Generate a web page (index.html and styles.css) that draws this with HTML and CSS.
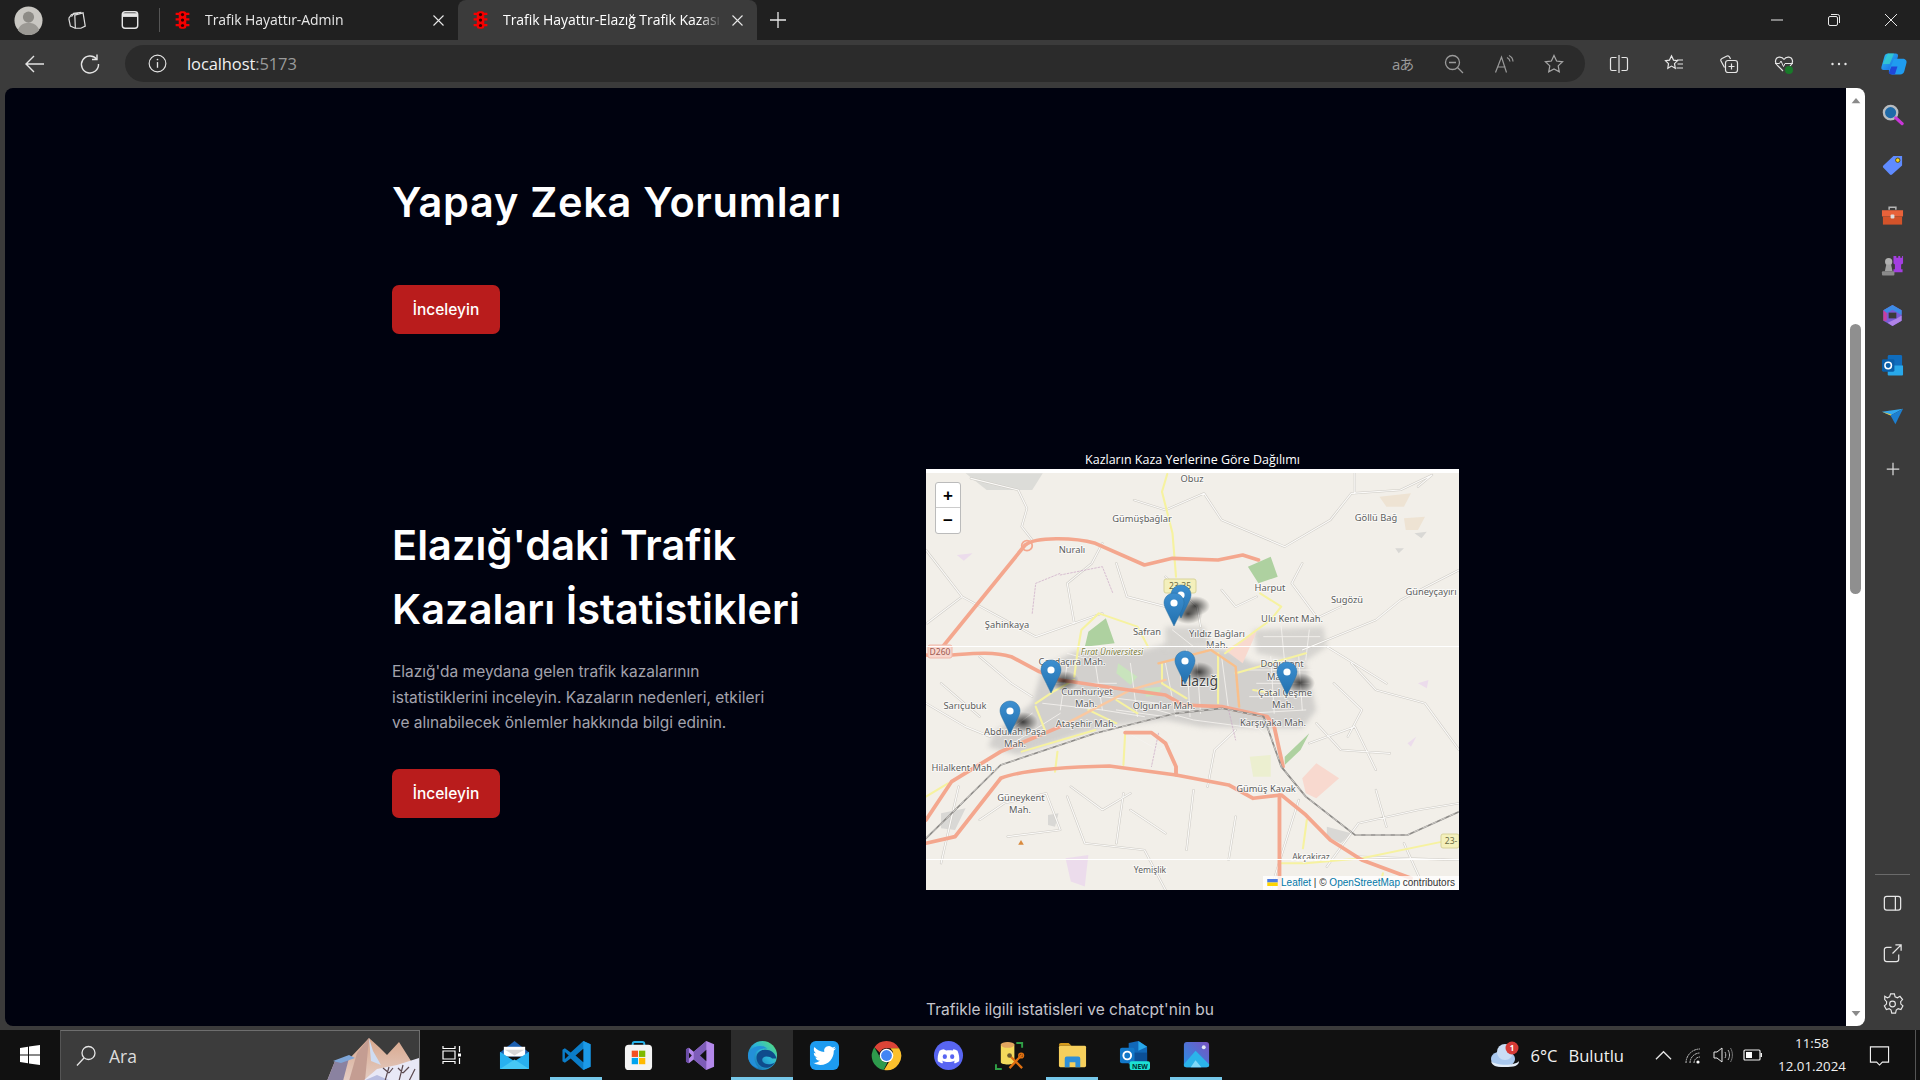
FILE: index.html
```html
<!DOCTYPE html>
<html lang="tr">
<head>
<meta charset="utf-8">
<title>Trafik Hayattır-Elazığ Trafik Kazaları</title>
<link rel="stylesheet" href="styles.css">
</head>
<body>
<div class="screen">
  <svg class="defs" width="0" height="0">
    <defs>
      <g id="light"><rect x="5" y="1" width="6" height="14" rx="2" fill="#f40000"/><path d="M2.500 3h11M2.500 7.500h11M2.500 12h11" stroke="#f40000" stroke-width="1.800"/><circle cx="8" cy="3.600" r="1.300" fill="#300"/><circle cx="8" cy="8" r="1.300" fill="#300"/><circle cx="8" cy="12.400" r="1.300" fill="#300"/></g>
      <path id="minor" d="M145 85L280 120L305 175L290 230L320 270M610 150L700 180L810 130L860 210L1040 290L1170 210L1230 130L1370 120L1460 75L1420 110M17 300L120 440L330 560L520 490M120 440L20 520M1090 600L1300 510L1370 450L1537 360M1230 640L1300 720L1440 760L1537 900M1160 590L1330 700M170 1110L240 1060L360 1030L400 1140L250 1160M900 840L840 900L820 1010M1080 1050L1000 1320M1160 1250L1250 1120L1420 1080L1537 1060M420 1040L470 1180L640 1200L700 1320M1240 1220L1537 1230M520 280L490 340L420 400L440 520M700 380L790 470L800 530M1090 340L1060 400L1130 500M1200 470L1120 510M1130 820L1200 900L1340 910M110 1010L60 1240M780 1020L760 1200M1300 1020L1330 1130M580 1030L560 1180M900 1100L880 1230M17 760L130 830L200 860M600 1080L700 1150M1380 1180L1440 1320M1240 70L1240 130M560 340L590 440L700 470M860 420L900 470L960 440M1110 880L1240 830L1300 960M170 620L260 700L320 740M60 700L170 800M430 1010L520 1080L600 1030M1180 700L1260 780L1220 860" fill="none"/>
      <linearGradient id="pinGrad" x1="0" y1="0" x2="0" y2="1"><stop offset="0" stop-color="#3d8fd0"/><stop offset="1" stop-color="#2270ae"/></linearGradient>
      <radialGradient id="shadowGrad"><stop offset="0" stop-color="#000" stop-opacity=".7"/><stop offset=".5" stop-color="#000" stop-opacity=".35"/><stop offset="1" stop-color="#000" stop-opacity="0"/></radialGradient>
      <g id="pin"><path d="M10 0C4.500 0 0 4.400 0 9.800c0 2 1 4.900 2.700 8.300L10 33l7.300-14.900C19 14.700 20 11.800 20 9.800 20 4.400 15.500 0 10 0z" fill="url(#pinGrad)" stroke="#2a6e9e" stroke-width=".5"/><circle cx="10" cy="10" r="3.600" fill="#fff"/></g>
      <linearGradient id="edgeA" x1="0" y1="1" x2="1" y2="0"><stop offset="0" stop-color="#0c59a4"/><stop offset=".55" stop-color="#2cb4d9"/><stop offset="1" stop-color="#5ce66c"/></linearGradient>
      <linearGradient id="copA" x1="0" y1="0" x2="1" y2="1"><stop offset="0" stop-color="#2bc4f4"/><stop offset="1" stop-color="#1a5fe0"/></linearGradient>
      <linearGradient id="photoA" x1="0" y1="1" x2="1" y2="0"><stop offset="0" stop-color="#2590e8"/><stop offset="1" stop-color="#7a52c0"/></linearGradient>
      <linearGradient id="peak" x1="0" y1="0" x2="0" y2="1"><stop offset="0" stop-color="#d8a78c"/><stop offset="1" stop-color="#e4cdc4"/></linearGradient>
    </defs>
  </svg>

  <header class="tabstrip">
    <svg class="avatar" viewBox="0 0 30 30"><circle cx="15" cy="15" r="14.500" fill="#c9c7c2"/><circle cx="15" cy="11.500" r="5.800" fill="#8d8b86"/><path d="M4 25c2-6 6-7.500 11-7.500S24 19 26 25a14 14 0 0 1-22 0z" fill="#9b9994"/></svg>
    <svg class="tool-ico collections-ico" viewBox="0 0 20 20" fill="none" stroke="#dcdcdc" stroke-width="1.100"><path d="M8 5.500l7.500-2 2 12-4 2H8.500z"/><path d="M5 7l2-3 7-1"/><path d="M2.500 8.500L5 5l6-1"/><path d="M2.500 8.500l1.500 7 4.500 2"/></svg>
    <svg class="tool-ico tabs-ico" viewBox="0 0 20 20" fill="none" stroke="#e6e6e6" stroke-width="1.300"><rect x="3" y="2.500" width="14" height="15" rx="2.500"/><path d="M3.500 5.500h13" stroke-width="3.400"/></svg>
    <span class="tab-sep"></span>
    <div class="tab">
      <svg class="favicon" viewBox="2 0 12 16"><use href="#light"/></svg>
      <span class="tab-title">Trafik Hayattır-Admin</span>
      <svg class="tab-close" viewBox="0 0 11 11" stroke="#e8e8e8" stroke-width="1.100"><path d="M.5.5l10 10M10.500.5l-10 10"/></svg>
    </div>
    <div class="tab tab-active">
      <svg class="favicon" viewBox="2 0 12 16"><use href="#light"/></svg>
      <span class="tab-title">Trafik Hayattır-Elazığ Trafik Kazası</span>
      <svg class="tab-close" viewBox="0 0 11 11" stroke="#e8e8e8" stroke-width="1.100"><path d="M.5.5l10 10M10.500.5l-10 10"/></svg>
    </div>
    <svg class="tab-new" viewBox="0 0 18 18" stroke="#e8e8e8" stroke-width="1.300"><path d="M9 1v16M1 9h16"/></svg>
    <div class="window-btns">
      <svg viewBox="0 0 14 14" stroke="#e8e8e8" fill="none"><path d="M1 7h12"/></svg>
      <svg viewBox="0 0 14 14" stroke="#e8e8e8" fill="none"><rect x="1.500" y="3.500" width="9" height="9" rx="1.500"/><path d="M4 1.500h6.500a2 2 0 0 1 2 2V10"/></svg>
      <svg viewBox="0 0 14 14" stroke="#e8e8e8" fill="none"><path d="M1 1l12 12M13 1L1 13"/></svg>
    </div>
  </header>

  <nav class="toolbar">
    <svg class="nav-ico" viewBox="0 0 22 22" fill="none" stroke="#e4e4e4" stroke-width="1.400"><path d="M20 11H2M10 3l-8 8 8 8"/></svg>
    <svg class="nav-ico" viewBox="0 0 22 22" fill="none" stroke="#e4e4e4" stroke-width="1.400"><path d="M17.500 6A8.500 8.500 0 1 0 19.500 11"/><path d="M18 1.500V6.500H13"/></svg>
    <div class="address">
      <svg class="info-ico" viewBox="0 0 20 20" fill="none" stroke="#e4e4e4" stroke-width="1.200"><circle cx="10" cy="10" r="8.800"/><path d="M10 8.500v6" stroke-width="1.400"/><circle cx="10" cy="5.800" r=".9" fill="#e4e4e4" stroke="none"/></svg>
      <span class="url">localhost<span class="url-port">:5173</span></span>
      <div class="addr-icons">
        <span class="translate-ico">aあ</span>
        <svg viewBox="0 0 20 20" fill="none" stroke="#9a9a9a" stroke-width="1.300"><circle cx="8.500" cy="8.500" r="7"/><path d="M5 8.500h7M13.500 13.500l5.500 5.500"/></svg>
        <svg viewBox="0 0 20 20" fill="none" stroke="#9a9a9a" stroke-width="1.200"><path d="M1.500 18.500L7.500 3l5 15.500M3.500 13h8"/><path d="M13 3.500a5 5 0 0 1 3 4M15 1.500a7 7 0 0 1 4 6"/></svg>
        <svg viewBox="0 0 20 20" fill="none" stroke="#a8a8a8" stroke-width="1.200"><path d="M10 1.500l2.600 5.500 6 .8-4.400 4.100 1.100 6L10 15l-5.300 2.900 1.100-6L1.400 7.800l6-.8z"/></svg>
      </div>
    </div>
    <div class="tool-icons">
      <svg viewBox="0 0 20 20" fill="none" stroke="#e6e6e6" stroke-width="1.200"><path d="M7.500 3.500H3a1.500 1.500 0 0 0-1.500 1.500v10A1.500 1.500 0 0 0 3 16.500h4.500M12.500 3.500H17A1.500 1.500 0 0 1 18.500 5v10a1.500 1.500 0 0 1-1.500 1.500h-4.500M10 1v18"/></svg>
      <svg viewBox="0 0 20 20" fill="none" stroke="#e6e6e6" stroke-width="1.200"><path d="M7.500 1.800l2 4.300 4 .6-3 3 .8 4.600-3.800-2.200-3.700 2.200.7-4.600-3-3 4-.6z"/><path d="M13 6h6M13.500 10h5.500M12.500 14h6.500"/></svg>
      <svg viewBox="0 0 20 20" fill="none" stroke="#e6e6e6" stroke-width="1.200"><rect x="6.500" y="6.500" width="12" height="12" rx="2.500"/><path d="M12.500 9.500v6M9.500 12.500h6M5.500 13.500L2 7c-.5-1 0-2 1-2.500l5-2.500c1-.4 2 0 2.500 1l1 2"/></svg>
      <svg viewBox="0 0 20 20" fill="none"><path d="M10 5.500C8 2 2 2 1.500 7c-.2 2 1 3.800 2.500 5l5 5M10 5.500C12 2 18 2 18.500 7c.2 2-1 3.800-2.500 5" stroke="#e6e6e6" stroke-width="1.200"/><path d="M1 9.500h4.500l1.500-2.500 2.500 5.500L11 9.500h8" stroke="#e6e6e6"/><circle cx="15" cy="16" r="4" fill="#197a2a"/></svg>
      <svg viewBox="0 0 20 20" fill="#e6e6e6"><circle cx="3.500" cy="10" r="1.200"/><circle cx="10" cy="10" r="1.200"/><circle cx="16.500" cy="10" r="1.200"/></svg>
      <svg class="copilot" viewBox="0 0 30 30"><path d="M8 3h9c2 0 3 1 2.600 3L16 19c-.5 2-2 3-4 3H3c-2 0-3-1.500-2.500-3.500L4 6c.6-2 2-3 4-3z" fill="url(#copA)"/><path d="M8 3h7L10 15H2z" fill="#38d6c8" opacity=".7"/><path d="M15 9h10c3 0 5 2 4.400 4.500L27 23c-.7 2.500-2.300 4-5 4h-9c-3 0-4.500-2-3.800-4.500z" fill="#1f9cf0"/><path d="M12 18h7l-3 9h-4c-2 0-3-1-2.800-2.500z" fill="#2046d8"/></svg>
    </div>
  </nav>

  <div class="browser">
    <main class="viewport">
      <section class="intro">
        <h1 class="heading">Yapay Zeka Yorumları</h1>
        <a class="btn">İnceleyin</a>
      </section>

      <section class="stats">
        <div class="stats-copy">
          <h1 class="heading heading-wrap">Elazığ'daki Trafik Kazaları İstatistikleri</h1>
          <p class="lead">Elazığ'da meydana gelen trafik kazalarının<br>istatistiklerini inceleyin. Kazaların nedenleri, etkileri<br>ve alınabilecek önlemler hakkında bilgi edinin.</p>
          <a class="btn">İnceleyin</a>
        </div>
        <figure class="chart">
          <figcaption class="chart-title">Kazların Kaza Yerlerine Göre Dağılımı</figcaption>
          <div class="map">
            <svg class="map-svg" viewBox="0 0 533 421">
              <rect width="533" height="421" fill="#f2efe9"/>
              <g class="map-base" transform="translate(-6 -19) scale(.3507 .3333)" fill="none" stroke-linejoin="round" stroke-linecap="round">
                <path d="M640 600L720 575L880 600L950 640L1100 640L1130 780L1090 835L960 835L800 830L700 810L560 825L450 855L280 915L195 890L210 850L320 760L350 650L440 605Z" fill="#d2d0cd" class="soft"/>
                <path d="M950 540L1150 530L1160 590L1090 640L960 610Z M700 530L810 530L830 590L700 600Z" fill="#d6d4d0" class="soft"/>
                <path d="M130 70H350L320 120H190Z" fill="#dcdcd8"/>
                <path d="M480 545L530 505L555 580L470 590Z M935 350L1000 320L1020 380L965 400Z M1040 920L1110 850L1085 900L1040 945Z" fill="#aed1a0"/>
                <path d="M565 640L620 680L600 705L560 670Z M640 715L690 710L680 735L645 740Z" fill="#c9e4bd"/>
                <path d="M1090 985L1130 940L1195 985L1130 1045L1100 1030Z M870 600L960 545L920 640Z" fill="#f8d9cf"/>
                <path d="M105 315L150 310L125 332Z M415 1225L480 1215L470 1310L430 1295Z M1390 880L1415 860L1400 890Z M1420 700L1450 690L1445 715Z" fill="#ecdcec"/>
                <path d="M1310 140L1400 130L1380 170L1330 170Z M1380 205L1440 200L1420 240L1385 240Z" fill="#eee3d3"/>
                <path d="M940 920L1000 915L1000 980L950 980Z" fill="#ecefd0"/>
                <path d="M1410 250L1445 245L1430 265Z M1355 295L1380 295L1365 310Z M60 1090L130 1075L100 1140L60 1135Z M1160 1130L1230 1150L1200 1180L1160 1160Z M365 1095L395 1090L385 1130L365 1125Z" fill="#d9d8d5"/>
                <use href="#minor" stroke="#cdcac4" stroke-width="6.500"/>
                <use href="#minor" stroke="#fbfaf8" stroke-width="3.500"/>
                <path d="M640 770L780 810L960 835M560 830L680 900L720 880M960 830L1020 890M420 610L520 640M350 760L520 780L640 800M1000 620L1010 790M1080 620L1090 780M940 660L1120 660M760 600L770 800M700 640L730 800M860 620L880 780M960 700L1110 700M980 560L1140 560M1030 530L1040 640M1110 540L1100 630M230 860L320 790M250 890L400 790M420 640L400 780M500 640L520 780M600 640L620 800M360 700L560 700M520 740L680 760M720 540L780 590M790 640L800 790M940 740L1110 740M930 790L1100 780M560 780L700 800" stroke="#f4f2ef" stroke-width="2.500"/>
                <path d="M400 375L520 350L550 430M320 490L330 400L400 370M880 780L900 870M680 850L660 950" stroke="#c9a5c5" stroke-width="2" stroke-dasharray="5 5"/>
                <g stroke="#f6f2a0" stroke-width="6">
                  <path d="M705 72L690 125L720 250L730 380M450 600L460 540L510 490L620 530L650 590M970 430L1030 470L1000 510L960 540L870 610M585 850L580 945M392 905L385 965"/>
                  <path d="M330 760L380 725L440 690M290 905L500 840M330 770L360 850M440 680L450 600M1103 1110L1092 1195M1030 1240L1100 1240L1260 1225L1490 1175M1320 1270L1310 1320"/>
                  <path d="M690 640L690 700L760 745M850 610L850 760M900 670L1100 610M950 720L1010 730M560 750L620 790M480 780L560 820M17 1040L80 1000"/>
                </g>
                <path d="M680 640L830 600L900 650L910 770" stroke="#f9bf8a" stroke-width="7"/>
                <path d="M400 830L600 720L700 690" stroke="#fac8a0" stroke-width="7"/>
                <g stroke="#f4a78e" stroke-width="11">
                  <path d="M65 590L300 285C330 260 440 262 500 280L640 345L720 325L850 330L920 315L965 330"/>
                  <path d="M17 615C80 625 180 595 260 620L340 665L400 690L560 715L700 735L750 765L860 770L990 800L1010 830L1035 950"/>
                  <path d="M17 1180L100 1160L230 985C300 955 460 950 540 948L730 975L880 1005L950 1045L1030 1035L1100 1095L1170 1170L1260 1230L1400 1285"/>
                  <path d="M1025 1035V1320"/>
                  <path d="M17 1110L90 995L230 905L400 830"/>
                  <path d="M585 848H660L700 880L730 950V975"/>
                </g>
                <circle cx="305" cy="287" r="15" stroke="#f4a78e" stroke-width="5"/>
                <path d="M17 1165L100 1080L230 945L500 850L730 790L860 775L980 800L1030 950L1100 1040L1240 1155H1390L1537 1085" stroke="#8d8b88" stroke-width="5"/>
                <path d="M17 1165L100 1080L230 945L500 850L730 790L860 775L980 800L1030 950L1100 1040L1240 1155H1390L1537 1085" stroke="#d8d6d2" stroke-width="2.500" stroke-dasharray="14 14"/>
                <path d="M288 1170l8 14h-16z" fill="#d98a3d"/>
              </g>
              <g class="shields">
                <rect x="2" y="176" width="24" height="13" rx="2" fill="#f8d6cd" stroke="#f0b8aa"/><text x="14" y="186" class="lbl-sh lbl-sh-red">D260</text>
                <rect x="238" y="110" width="32" height="14" rx="2" fill="#f4f0bc" stroke="#d8d39a"/><text x="254" y="120" class="lbl-sh">23-35</text>
                <rect x="515" y="365" width="18" height="14" rx="2" fill="#f4f0bc" stroke="#d8d39a"/><text x="525" y="375" class="lbl-sh">23-</text>
              </g>
              <g class="labels">
                <text x="266" y="13">Obuz</text><text x="216" y="53">Gümüşbağlar</text><text x="450" y="52">Göllü Bağ</text><text x="146" y="84">Nuralı</text><text x="344" y="122">Harput</text><text x="421" y="134">Sugözü</text><text x="505" y="126">Güneyçayırı</text><text x="366" y="153">Ulu Kent Mah.</text><text x="81" y="159">Şahinkaya</text><text x="221" y="166">Safran</text><text x="291" y="168">Yıldız Bağları</text><text x="291" y="179">Mah.</text>
                <text x="186" y="186" class="lbl-uni">Fırat Üniversitesi</text>
                <text x="146" y="196">Çaydaçıra Mah.</text><text x="356" y="198">Doğukent</text><text x="352" y="211">Mah.</text><text x="273" y="217" class="lbl-city">Elazığ</text><text x="161" y="226">Cumhuriyet</text><text x="160" y="238">Mah.</text><text x="39" y="240">Sarıçubuk</text><text x="238" y="240">Olgunlar Mah.</text><text x="359" y="227">Çatal Çeşme</text><text x="357" y="239">Mah.</text><text x="160" y="258">Ataşehir Mah.</text><text x="347" y="257">Karşıyaka Mah.</text><text x="89" y="266">Abdullah Paşa</text><text x="89" y="278">Mah.</text><text x="37" y="302">Hilalkent Mah.</text><text x="340" y="323">Gümüş Kavak</text><text x="95" y="332">Güneykent</text><text x="94" y="344">Mah.</text><text x="385" y="391" class="lbl-small">Akçakiraz</text><text x="224" y="404" class="lbl-small">Yemişlik</text>
              </g>
              <path d="M0 177.500H533M0 390.500H533" stroke="#fff" stroke-width="1.200"/>
              <rect width="533" height="4" fill="#fff"/>
              <g class="pin-shadows">
                <ellipse cx="269" cy="137" rx="15" ry="10" fill="url(#shadowGrad)"/><ellipse cx="262" cy="145" rx="15" ry="10" fill="url(#shadowGrad)"/><ellipse cx="138" cy="212" rx="15" ry="10" fill="url(#shadowGrad)"/><ellipse cx="273" cy="203" rx="15" ry="10" fill="url(#shadowGrad)"/><ellipse cx="374" cy="214" rx="15" ry="10" fill="url(#shadowGrad)"/><ellipse cx="97" cy="253" rx="15" ry="10" fill="url(#shadowGrad)"/>
              </g>
              <use href="#pin" x="245" y="116"/><use href="#pin" x="238" y="124"/><use href="#pin" x="115" y="191"/><use href="#pin" x="249" y="182"/><use href="#pin" x="351" y="193"/><use href="#pin" x="74" y="232"/>
            </svg>
            <div class="zoom-ctl"><span class="zoom-btn">+</span><span class="zoom-btn">−</span></div>
            <div class="attrib"><svg class="flag" viewBox="0 0 12 8"><rect width="12" height="4" fill="#4c7be1"/><rect y="4" width="12" height="4" fill="#ffd500"/></svg> <a>Leaflet</a> | © <a>OpenStreetMap</a> contributors</div>
          </div>
        </figure>
      </section>

      <section class="next">
        <p class="next-text">Trafikle ilgili istatisleri ve chatcpt'nin bu</p>
      </section>
    </main>

    <div class="scrollbar">
      <svg class="sb-arrow" viewBox="0 0 12 8"><path d="M6 1l5 6H1z" fill="#8a8a8a"/></svg>
      <div class="sb-track"><div class="sb-thumb"></div></div>
      <svg class="sb-arrow" viewBox="0 0 12 8"><path d="M6 7l5-6H1z" fill="#8a8a8a"/></svg>
    </div>

    <aside class="sidebar">
      <div class="side-top">
        <svg viewBox="0 0 24 24"><circle cx="10" cy="10" r="7" fill="#1f6aa8" stroke="#b8bcc0" stroke-width="2.400"/><path d="M15.500 15.500L22 21.500" stroke="#c936d8" stroke-width="3.400" stroke-linecap="round"/></svg>
        <svg viewBox="0 0 24 24"><path d="M2.500 13L13 3h9v10L11.500 22.500c-.7.7-1.600.7-2.200 0L2.500 15.300c-.7-.7-.7-1.600 0-2.300z" fill="#5f8bff"/><circle cx="17.500" cy="7.500" r="2.300" fill="#f4d21f" stroke="#554a10"/></svg>
        <svg viewBox="0 0 24 24"><path d="M8.500 6V3.500h7V6" fill="none" stroke="#b5b5b5" stroke-width="1.600"/><path d="M1 6.500h22V13H1z" fill="#e8623a"/><path d="M2 13h20v8.500H2z" fill="#d3532a"/><rect x="10" y="11" width="4" height="4" rx="1" fill="#ddd"/></svg>
        <svg viewBox="0 0 24 24"><path d="M14 2h2v2h2V2h2v2h2V2h1v8l-2 1v5h1.500v3H13v-3h1.500v-5L13 10V2z" fill="#a33fe0"/><circle cx="8" cy="8" r="3.800" fill="#b0b0b0"/><path d="M5.500 11h5l1.500 7H4z" fill="#a2a2a2"/><rect x="1" y="18" width="13" height="4.500" rx="1" fill="#8a8a8a"/></svg>
        <svg viewBox="0 0 24 24"><path d="M12 1l9.500 5.500v11L12 23l-9.500-5.500v-11z" fill="#7a5cd6"/><path d="M12 1l9.500 5.500v5L12 6 6 9.500 2.500 6.500z" fill="#3c8ce6"/><path d="M2.500 6.500L6 9.500v8l-3.500 0z" fill="#c93f9f"/><path d="M21.500 12v5.500L12 23l-5-3.500 9-4z" fill="#b083e8"/><path d="M8 9h8v6H8z" fill="#3b3b3b"/></svg>
        <svg viewBox="0 0 24 24"><rect x="7" y="1" width="15" height="15" rx="1.500" fill="#0f6cbd"/><path d="M7 12h16v9.500a1 1 0 0 1-1 1H8a1 1 0 0 1-1-1z" fill="#28a8ea"/><rect x="1" y="5.500" width="13" height="13" rx="1.500" fill="#0a5ea8"/><circle cx="7.500" cy="12" r="3.400" fill="none" stroke="#fff" stroke-width="1.600"/></svg>
        <svg viewBox="0 0 24 24"><path d="M1 7l22-3-13 7z" fill="#33a8ef"/><path d="M1 7l9 4 1-1z" fill="#f4c430"/><path d="M10 11L23 4l-8 16z" fill="#1d7fd0"/></svg>
        <svg class="side-plus" viewBox="0 0 24 24" stroke="#d8d8d8" stroke-width="1.500"><path d="M12 4.500v15M4.500 12h15"/></svg>
      </div>
      <div class="side-bottom">
        <span class="side-sep"></span>
        <svg viewBox="0 0 24 24" fill="none" stroke="#e6e6e6" stroke-width="1.300"><rect x="3.500" y="4.500" width="17" height="14.500" rx="2.500"/><path d="M15 4.500v14.500"/></svg>
        <svg viewBox="0 0 24 24" fill="none" stroke="#e6e6e6" stroke-width="1.300"><path d="M11 5.500H6A2.500 2.500 0 0 0 3.500 8v10A2.500 2.500 0 0 0 6 20.500h10a2.500 2.500 0 0 0 2.500-2.500v-5M12 12l9-9M15 3h6v6"/></svg>
        <svg viewBox="0 0 24 24" fill="none" stroke="#e6e6e6" stroke-width="1.200"><path d="M10 2h4l.7 3 2.400 1 2.700-1.500 2.700 3.400-2 2.200.2 2.500 2.200 1.900-2.100 3.700-2.900-.9-2 1.500-.7 3.200h-4l-.7-3.200-2-1.500-2.900.9-2.100-3.700 2.200-1.900.2-2.500-2-2.200L3.900 4.500 6.600 6 9 5z"/><circle cx="12" cy="12.500" r="3"/></svg>
      </div>
    </aside>
  </div>

  <footer class="taskbar">
    <div class="start"><svg viewBox="0 0 20 20" fill="#fff"><path d="M0 3l8-1.200V9.400H0zM9 1.600L20 0v9.400H9zM0 10.400h8v7.800L0 17zM9 10.400h11V20L9 18.400z"/></svg></div>
    <div class="search">
      <svg class="search-ico" viewBox="0 0 22 22" fill="none" stroke="#e6e6e6" stroke-width="1.300"><circle cx="13.500" cy="8" r="6.500"/><path d="M9 13L2 20.500"/></svg>
      <span class="search-text">Ara</span>
      <svg class="search-art" viewBox="0 0 100 50">
        <path d="M8 50L16 30L32 26L50 7L60 16L68 24L80 11L92 30L100 28V50z" fill="url(#peak)"/>
        <path d="M8 50L16 30L30 27L24 50z" fill="#8a82a0"/>
        <path d="M30 50L38 22L50 7L46 50z" fill="#c49d92"/>
        <path d="M50 7L54 20L62 34L52 30z" fill="#cfdcf2"/>
        <path d="M14 30L30 24L36 27L22 32z" fill="#7fa6d8"/>
        <path d="M44 50L58 38L78 34L100 27V50z" fill="#e8e8f6"/>
        <path d="M44 50L58 44L72 50z" fill="#b9bde0"/>
        <path d="M66 50L70 36M70 42L64 37M70 42L74 37M80 50L84 34M84 42L90 36M84 42L79 37M96 38L90 50" stroke="#5c4a50" stroke-width="1.200" fill="none"/>
      </svg>
    </div>
    <div class="task-icons">
      <div class="task"><svg class="ico-sm" viewBox="0 0 20 20" fill="none" stroke="#fff" stroke-width="1.200"><path d="M1 1v2.500h12V1M1 19v-2.500h12V19M1 6h12v8H1zM17.500 1v6M17.500 13v6"/><rect x="16" y="8.500" width="3" height="3" fill="#fff" stroke="none"/></svg></div>
      <div class="task"><svg viewBox="0 0 32 32"><path d="M1 13L16 1l15 12v4H1z" fill="#1c5fb0"/><path d="M5 7h22v10H5z" fill="#fff"/><path d="M1 12l15 10 15-10v18H1z" fill="#28b0ef"/><path d="M1 30l15-10 15 10z" fill="#46c7f5"/><path d="M6 10h20l-10 6z" fill="#d8d8d8"/></svg></div>
      <div class="task is-open"><svg viewBox="0 0 32 32"><path d="M23 1l7.500 3.500v23L23 31 10 19l-6 4.500L1.500 22V10L4 8.500l6 4.500z" fill="#0b7dc8"/><path d="M23 1l7.500 3.500v23L23 31z" fill="#1c9ae8"/><path d="M23 9l-8 7 8 7z" fill="#111"/><path d="M4 12.500L8 16l-4 3.500z" fill="#111"/></svg></div>
      <div class="task"><svg viewBox="0 0 32 32"><path d="M10 7V4a2 2 0 0 1 2-2h8a2 2 0 0 1 2 2v3" fill="none" stroke="#25b0e8" stroke-width="2"/><rect x="2" y="5" width="28" height="26" rx="4" fill="#f4f4f4"/><rect x="9" y="11" width="6.500" height="6.500" fill="#f25022"/><rect x="16.500" y="11" width="6.500" height="6.500" fill="#7fba00"/><rect x="9" y="18.500" width="6.500" height="6.500" fill="#00a4ef"/><rect x="16.500" y="18.500" width="6.500" height="6.500" fill="#ffb900"/></svg></div>
      <div class="task"><svg viewBox="0 0 32 32"><path d="M22 1l8 3.500v23L22 31 9 20l-5 4-3-1.500V9.500L4 8l5 4z" fill="#b388ea"/><path d="M22 1v30L9 20V12z" fill="#7d5cb8"/><path d="M22 10l-6.500 6 6.500 6z" fill="#111"/><path d="M4 13l3 3-3 3z" fill="#111"/><path d="M1 9.500L4 8v16l-3-1.500z" fill="#6a4ca6"/></svg></div>
      <div class="task is-active"><svg viewBox="0 0 32 32"><circle cx="16" cy="16" r="15" fill="url(#edgeA)"/><path d="M30.500 19C29 13 24 9.500 18 10c-6 .5-9 5-8 10 1 6 7 10 13 8 3-1 5-3 6-5-4 3-11 3-13-1-1-3 1-5 4-5 3 0 5 1 6 2z" fill="#0f4c8c"/><path d="M3 11C7 6 16 4 21 9c-5-1-11 1-13 6-1 4 0 9 4 14C5 28 1 22 1 16c0-2 1-4 2-5z" fill="#2390d8"/></svg></div>
      <div class="task"><svg viewBox="0 0 32 32"><rect x="1" y="1" width="30" height="30" rx="6" fill="#1d9bf0"/><g transform="translate(4 4)"><path fill="#fff" d="M23.950 4.570a10 10 0 0 1-2.820.77 4.960 4.960 0 0 0 2.160-2.720c-.95.550-2 .950-3.130 1.180a4.920 4.920 0 0 0-8.380 4.480C7.690 8.100 4.070 6.130 1.640 3.160a4.820 4.820 0 0 0-.66 2.480c0 1.710.87 3.210 2.190 4.100a4.900 4.900 0 0 1-2.230-.62v.06a4.920 4.920 0 0 0 3.950 4.830 5 5 0 0 1-2.210.08 4.940 4.940 0 0 0 4.610 3.420A9.870 9.870 0 0 1 0 19.540a14 14 0 0 0 7.560 2.210c9.050 0 14-7.500 14-13.980 0-.21 0-.42-.02-.63a9.940 9.940 0 0 0 2.460-2.550z"/></g></svg></div>
      <div class="task"><svg viewBox="0 0 32 32"><path d="M16 1a15 15 0 0 1 13 7.500H16a7.500 7.500 0 0 0-7 4.500L3.500 7.500A15 15 0 0 1 16 1z" fill="#db4437"/><path d="M3.500 7.500L10 19a7.500 7.500 0 0 0 7 4L13 31A15 15 0 0 1 3.500 7.500z" fill="#2e9a4c"/><path d="M29 8.500A15 15 0 0 1 13.500 31L20 20a7.500 7.500 0 0 0 0-11.500z" fill="#fbc02d"/><circle cx="16" cy="16" r="7" fill="#fff"/><circle cx="16" cy="16" r="5.600" fill="#4285f4"/></svg></div>
      <div class="task"><svg viewBox="0 0 32 32"><circle cx="16" cy="16" r="15" fill="#5865f2"/><path d="M11 9.500c-1.500.2-3 .8-4.300 1.700C5 15 4.500 18.500 5 22c1.500 1.100 3 1.800 4.500 2.200l1-1.700-1.500-.8.400-.3c3.900 1.800 9.300 1.800 13.200 0l.4.300-1.500.8 1 1.700c1.500-.4 3-1.100 4.500-2.200.5-4-.3-7.500-1.700-10.800-1.300-.9-2.800-1.500-4.300-1.700l-.6 1.300c-2.500-.4-4.300-.4-6.800 0z" fill="#fff"/><ellipse cx="12.200" cy="17.200" rx="2.200" ry="2.500" fill="#5865f2"/><ellipse cx="19.800" cy="17.200" rx="2.200" ry="2.500" fill="#5865f2"/></svg></div>
      <div class="task"><svg viewBox="0 0 32 32"><path d="M6 5c0-3 14-3 14 0v18c0 3-14 3-14 0z" fill="#f4da5c"/><ellipse cx="13" cy="5" rx="7" ry="3" fill="#e2a660"/><path d="M22 3h6v5M7 30H1v-5" fill="none" stroke="#2f9f46" stroke-width="2"/><path d="M14 15l14 14M28 15L15 29" stroke="#e07010" stroke-width="2.400"/><circle cx="27" cy="16" r="2.400" fill="none" stroke="#e07010" stroke-width="1.600"/><circle cx="15" cy="16" r="2.400" fill="#6a5a30"/></svg></div>
      <div class="task is-open"><svg viewBox="0 0 32 32"><path d="M2 5a2 2 0 0 1 2-2h8l3 3h-13z" fill="#d49a1c"/><rect x="2" y="6" width="28" height="22" rx="1.500" fill="#f6cf5c"/><path d="M8 28V19a2 2 0 0 1 2-2h12a2 2 0 0 1 2 2v9h-5v-5h-6v5z" fill="#2f8fd8"/></svg></div>
      <div class="task"><svg viewBox="0 0 32 32"><path d="M10 3l10-2 9 6v18H10z" fill="#1168b8"/><path d="M20 1l9 6-9 4z" fill="#28a8ea"/><path d="M10 13h19v9H10z" fill="#0c4f96"/><rect x="1" y="8" width="15" height="16" rx="2" fill="#1277c8"/><circle cx="8.500" cy="16" r="4" fill="none" stroke="#fff" stroke-width="2"/><rect x="11" y="22" width="21" height="9" rx="2" fill="#1de0d4"/><text x="21.500" y="29.500" class="new-tag">NEW</text></svg></div>
      <div class="task is-open"><svg viewBox="0 0 32 32"><rect x="3" y="2" width="26" height="26" rx="3" fill="url(#photoA)"/><circle cx="23.500" cy="7.500" r="2" fill="#e4e8f4"/><path d="M3 25L15 11l14 14v1a2 2 0 0 1-2 2H5a2 2 0 0 1-2-2z" fill="#2bb3ea"/><path d="M10 28l5-7 6 7z" fill="#7fd8f8"/></svg></div>
    </div>
    <div class="tray">
      <svg class="weather" viewBox="0 0 32 28"><ellipse cx="14" cy="18" rx="12" ry="8" fill="#a9c8ee"/><circle cx="16" cy="11" r="8" fill="#c9ddf5"/><path d="M2 20c5 5 24 5 28 0 0 5-5 6-14 6S3 25 2 20z" fill="#e3edf9"/><circle cx="23" cy="7" r="6.500" fill="#d63a36"/><text x="23" y="10" class="badge-num">1</text></svg>
      <span class="temp">6°C</span>
      <span class="weather-text">Bulutlu</span>
      <svg class="tray-ico chevron" viewBox="0 0 18 18" fill="none" stroke="#e8e8e8" stroke-width="1.300"><path d="M1 13l8-8 8 8"/></svg>
      <svg class="tray-ico" viewBox="0 0 20 20" fill="none" stroke="#c8c8c8"><path d="M3 18a14 14 0 0 1 14-14M7 18a10 10 0 0 1 10-10M11 18a6 6 0 0 1 6-6" stroke-dasharray="2 .6"/><circle cx="15" cy="17" r="1.600" fill="#fff" stroke="none"/></svg>
      <svg class="tray-ico" viewBox="0 0 20 20" fill="none" stroke="#e8e8e8"><path d="M1 7h3l5-4v14l-5-4H1z"/><path d="M12 7c1 2 1 4 0 6M15 5c2 3 2 7 0 10" stroke="#bbb"/><path d="M17.500 3c2.500 4 2.500 10 0 14" stroke="#777"/></svg>
      <svg class="tray-ico" viewBox="0 0 20 20"><rect x="1" y="5" width="16" height="10" rx="1" fill="none" stroke="#eee" stroke-width="1.200"/><rect x="3" y="7" width="6" height="6" fill="#fff"/><rect x="17.500" y="8" width="1.500" height="4" fill="#eee"/></svg>
      <div class="clock"><span>11:58</span><span>12.01.2024</span></div>
      <svg class="notif" viewBox="0 0 22 22" fill="none" stroke="#f0f0f0" stroke-width="1.200"><path d="M1.500 2h19v16H14l-3 3-3-3H1.500z"/></svg>
      <span class="show-desktop"></span>
    </div>
  </footer>
</div>
</body>
</html>
```

FILE: styles.css
```css
* { box-sizing: border-box; }
html, body { margin: 0; padding: 0; }
body { background: #111; font-family: "Open Sans", "Noto Sans", sans-serif; }
.screen { width: 1920px; height: 1080px; display: flex; flex-direction: column; overflow: hidden; background: #3b3b3b; }
.defs { position: absolute; }

/* tab strip */
.tabstrip { height: 40px; flex: none; background: #202020; display: flex; align-items: center; padding-left: 14px; }
.avatar { width: 29px; height: 29px; flex: none; }
.tool-ico { width: 22px; height: 22px; flex: none; }
.collections-ico { margin-left: 23px; }
.tabs-ico { margin-left: 31px; }
.tab-sep { width: 1px; height: 24px; background: #555; margin-left: 18px; flex: none; }
.tab { width: 299px; height: 40px; flex: none; display: flex; align-items: center; padding: 0 14px 0 15px; border-radius: 8px 8px 0 0; color: #e8e8e8; }
.tab:first-of-type { width: 298px; }
.tab-active { background: #3b3b3b; color: #fff; }
.favicon { width: 15px; height: 20px; flex: none; }
.tab-title { margin-left: 15px; padding-bottom: 2px; flex: 1; min-width: 0; font-size: 14px; white-space: nowrap; overflow: hidden; letter-spacing: -.05px; -webkit-mask-image: linear-gradient(90deg, #000 90%, transparent); mask-image: linear-gradient(90deg, #000 90%, transparent); }
.tab-close { width: 11px; height: 11px; flex: none; margin-left: 10px; }
.tab-new { width: 18px; height: 18px; margin-left: 12px; flex: none; }
.window-btns { margin-left: auto; display: flex; gap: 43px; padding-right: 22px; }
.window-btns svg { width: 14px; height: 14px; }

/* toolbar */
.toolbar { height: 48px; flex: none; background: #3b3b3b; display: flex; align-items: center; padding: 0 0 0 24px; }
.nav-ico { width: 22px; height: 22px; flex: none; margin-right: 33px; }
.nav-ico:nth-of-type(2) { margin-right: 24px; }
.address { width: 1460px; height: 37px; margin-top: -1px; background: #2b2b2b; border-radius: 19px; display: flex; align-items: center; padding-left: 23px; flex: none; }
.info-ico { width: 19px; height: 19px; flex: none; }
.url { margin-left: 20px; color: #f0f0f0; font-size: 16.500px; letter-spacing: -.1px; }
.url-port { color: #9a9a9a; }
.addr-icons { margin-left: auto; display: flex; align-items: center; gap: 30px; padding-right: 21px; }
.addr-icons svg { width: 20px; height: 20px; }
.translate-ico { width: 22px; font-size: 15px; line-height: 20px; color: #9a9a9a; white-space: nowrap; font-family: "Open Sans", "Noto Sans CJK JP", sans-serif; letter-spacing: -1px; }
.tool-icons { display: flex; align-items: center; flex: 1; padding-left: 24px; gap: 35px; }
.tool-icons svg { width: 20px; height: 20px; flex: none; }
.tool-icons .copilot { width: 30px; height: 26px; margin-left: -5px; }

/* browser body */
.browser { height: 942px; flex: none; display: flex; background: #3b3b3b; }
.viewport { width: 1841px; height: 938px; margin-left: 5px; flex: none; background: #00020f; border-top-left-radius: 8px; border-bottom-left-radius: 8px; overflow: hidden; font-family: Inter, "Noto Sans", sans-serif; }
.intro { padding: 82px 0 0 387px; }
.heading { margin: 0; color: #fff; font-size: 41.500px; font-weight: 600; line-height: 64px; letter-spacing: .7px; }
.btn { display: flex; align-items: center; justify-content: center; width: 108px; height: 49px; background: #b91c1c; border-radius: 7px; color: #fff; font-size: 15.500px; font-weight: 500; }
.intro .btn { margin-top: 51px; }
.stats { display: grid; grid-template-columns: 534px 533px; padding: 115px 0 0 387px; align-items: start; }
.stats-copy { padding-top: 64px; }
.heading-wrap { width: 470px; letter-spacing: .05px; }
.lead { margin: 18px 0 33px; color: #a3a3ad; font-size: 15.500px; line-height: 25.500px; }
.chart { margin: 0; }
.chart-title { color: #fff; font-size: 12.500px; line-height: 22px; text-align: center; height: 20px; font-family: "Open Sans", sans-serif; }
.map { position: relative; width: 533px; height: 421px; overflow: hidden; }
.map-svg { display: block; width: 533px; height: 421px; }
.map-base { filter: blur(.9px); }
.soft { filter: blur(8px); }
.labels text { font-family: "Noto Sans", sans-serif; font-size: 9.300px; fill: #5b5b5b; text-anchor: middle; paint-order: stroke; stroke: rgba(255,255,255,.75); stroke-width: 1.600px; }
.labels .lbl-city { font-size: 14px; fill: #444; }
.labels .lbl-uni { fill: #7c7c40; font-style: italic; font-size: 8.500px; }
.labels .lbl-small { font-size: 8.500px; }
.lbl-sh { font-family: "Noto Sans", sans-serif; font-size: 8.500px; text-anchor: middle; fill: #6a6a40; }
.lbl-sh-red { fill: #9c5a50; }
.zoom-ctl { position: absolute; left: 9px; top: 13px; width: 26px; display: flex; flex-direction: column; background: #fff; border: 1px solid #bbb; border-radius: 3px; }
.zoom-btn { height: 25px; display: flex; align-items: center; justify-content: center; color: #000; font: 700 17px/1 "Liberation Sans", sans-serif; }
.zoom-btn:first-child { border-bottom: 1px solid #ccc; }
.attrib { position: absolute; right: 0; bottom: 0; height: 14px; padding: 0 4px; background: rgba(255,255,255,.8); color: #333; font: 10px/14px "Liberation Sans", sans-serif; white-space: nowrap; }
.attrib a { color: #0078a8; }
.flag { width: 11px; height: 7px; }
.next { padding: 107px 0 0 921px; }
.next-text { margin: 0; color: #c4c4cc; font-size: 15.500px; line-height: 25px; }

/* scrollbar */
.scrollbar { width: 19px; height: 938px; flex: none; background: #fff; border-radius: 0 8px 8px 0; display: flex; flex-direction: column; align-items: center; padding: 9px 0 9px; }
.sb-arrow { width: 12px; height: 7px; flex: none; }
.sb-track { flex: 1; width: 11px; padding-top: 220px; }
.sb-thumb { height: 270px; background: #8f8f8f; border-radius: 6px; }

/* sidebar */
.sidebar { flex: 1; display: flex; flex-direction: column; align-items: center; justify-content: space-between; padding: 15px 0 15px; }
.side-top { display: flex; flex-direction: column; align-items: center; gap: 27.300px; }
.side-top svg { width: 23px; height: 23px; }
.side-top .side-plus { margin-top: 4px; width: 20px; height: 20px; }
.side-bottom { display: flex; flex-direction: column; align-items: center; gap: 27px; }
.side-bottom svg { width: 23px; height: 23px; }
.side-sep { width: 35px; height: 1px; background: #6a6a6a; margin-bottom: -10px; }

/* taskbar */
.taskbar { height: 50px; flex: none; background: #111; display: flex; align-items: stretch; }
.start { width: 60px; display: flex; align-items: center; justify-content: center; }
.start svg { width: 20px; height: 20px; }
.search { position: relative; width: 360px; background: #3c3c3c; border: 1px solid #6e6e6e; border-bottom: 0; border-left-color: #555; display: flex; align-items: center; overflow: hidden; }
.search-ico { width: 22px; height: 22px; margin-left: 14px; }
.search-text { color: #dcdcdc; font-size: 17.500px; margin-left: 12px; }
.search-art { position: absolute; right: 0; top: 0; width: 100px; height: 50px; }
.task-icons { display: grid; grid-template-columns: repeat(13, 1fr); width: 806px; margin-left: 1px; flex: none; }
.task { position: relative; display: flex; align-items: center; justify-content: center; }
.task svg { width: 31px; height: 31px; }
.task .ico-sm { width: 20px; height: 20px; }
.is-active { background: #2c2c2c; }
.is-open::after, .is-active::after { content: ""; position: absolute; left: 5px; right: 5px; bottom: 0; height: 3px; background: #76c8ea; }
.is-active::after { left: 0; right: 0; }
.new-tag { font: 700 7px "Noto Sans", sans-serif; fill: #033; text-anchor: middle; }
.badge-num { font: 700 8px "Noto Sans", sans-serif; fill: #fff; text-anchor: middle; }
.tray { margin-left: auto; display: flex; align-items: center; color: #f0f0f0; }
.weather { width: 32px; height: 28px; margin-right: 9px; }
.temp { font-size: 16.600px; }
.weather-text { font-size: 16.600px; margin-left: 11px; margin-right: 31px; }
.tray-ico { width: 20px; height: 20px; margin-right: 10px; }
.chevron { width: 17px; height: 17px; margin-right: 11px; }
.clock { width: 76px; display: flex; flex-direction: column; align-items: center; font-size: 13.300px; line-height: 23px; margin-left: 1px; }
.notif { width: 21px; height: 21px; margin-left: 19px; }
.show-desktop { width: 1px; height: 100%; background: #555; margin-left: 25px; margin-right: 4px; }
```
